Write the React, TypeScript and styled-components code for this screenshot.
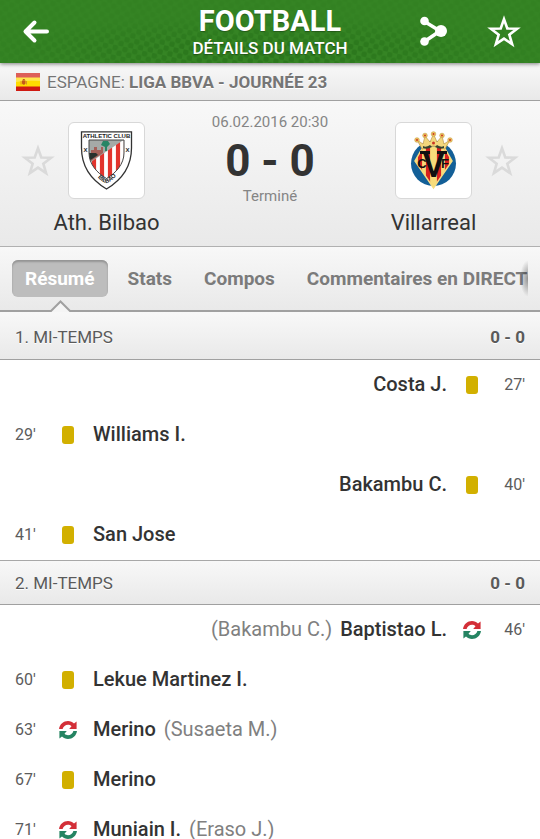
import React from 'react';
import styled, { createGlobalStyle, css } from 'styled-components';

const Global = createGlobalStyle`
  * { box-sizing: border-box; }
  body { margin: 0; background: #fff; font-family: Roboto, "Liberation Sans", sans-serif; color: #333; }
  button { font: inherit; border: 0; padding: 0; background: none; cursor: pointer; }
  h1, h2, h3, p, ul { margin: 0; padding: 0; font-weight: inherit; font-size: inherit; }
  svg { display: block; flex: none; }
`;

const silver = css`
  background: linear-gradient(#f8f8f8, #e9e9e9);
`;

const Page = styled.div`
  min-height: 100vh;
`;

const Header = styled.header`
  position: relative;
  z-index: 1;
  display: grid;
  grid-template-columns: 1fr auto 1fr;
  align-items: center;
  height: 63px;
  padding: 0 18px;
  color: #fff;
  background: #358424;
  box-shadow: 0 1px 4px rgba(0, 0, 0, 0.5);
`;

const Halftone = styled.svg`
  position: absolute;
  inset: 0;
  width: 100%;
  height: 100%;
`;

const Actions = styled.div<{ $end?: boolean }>`
  position: relative;
  display: flex;
  align-items: center;
  gap: 38px;
  padding-left: ${(p) => (p.$end ? 0 : 4)}px;
  justify-content: ${(p) => (p.$end ? 'flex-end' : 'flex-start')};
`;

const IconButton = styled.button<{ $tone?: string }>`
  display: flex;
  flex: none;
  color: ${(p) => p.$tone ?? '#fff'};
`;

const Titles = styled.div`
  position: relative;
  text-align: center;
  text-shadow: 0 1px 1px rgba(0, 0, 0, 0.3);
`;

const Title = styled.h1`
  font-size: 29px;
  line-height: 32px;
  font-weight: 700;
`;

const Subtitle = styled.p`
  font-size: 17px;
  line-height: 22px;
  font-weight: 500;
`;

const League = styled.div`
  ${silver}
  display: flex;
  align-items: center;
  height: 38px;
  gap: 7px;
  padding: 0 16px;
  border-bottom: 1px solid #a0a0a0;
  font-size: 17px;
  color: #757575;
  text-shadow: 0 1px 0 #fff;
`;

const Match = styled.section`
  ${silver}
  display: grid;
  grid-template-columns: 1fr 114px 1fr;
  height: 146px;
  border-bottom: 1px solid #b0b0b0;
`;

const Team = styled.div`
  display: grid;
  grid-template-columns: 1fr 77px 1fr;
  grid-template-rows: 77px 48px;
  align-items: center;
  padding-top: 21px;
`;

const StarSlot = styled.div<{ $away?: boolean }>`
  grid-row: 1;
  grid-column: ${(p) => (p.$away ? 3 : 1)};
  justify-self: ${(p) => (p.$away ? 'start' : 'end')};
  padding: 0 12px;
`;

const CrestBox = styled.div`
  grid-row: 1;
  grid-column: 2;
  height: 77px;
  background: #fff;
  border: 1px solid #d8d8d8;
  border-radius: 6px;
`;

const TeamName = styled.h2`
  grid-column: 1 / -1;
  grid-row: 2;
  font-size: 22px;
  line-height: 28px;
  text-align: center;
  white-space: nowrap;
`;

const ScoreBox = styled.div`
  display: flex;
  flex-direction: column;
  align-items: center;
  padding-top: 10px;
  white-space: nowrap;
  color: #858585;
  font-size: 15px;
  line-height: 22px;
`;

const Score = styled.strong`
  padding-top: 4px;
  font-size: 44px;
  line-height: 48px;
  color: #333;
`;

const Tabs = styled.nav`
  ${silver}
  position: relative;
  height: 65px;
  padding: 13px 12px 0;
  border-bottom: 2px solid #a0a0a0;
`;

const TabStrip = styled.div`
  position: relative;
  display: flex;
  gap: 8px;
  overflow: hidden;
`;

const Tab = styled.button<{ $active?: boolean }>`
  flex: none;
  height: 37px;
  padding: 0 ${(p) => (p.$active ? 13 : 12)}px;
  border-radius: 6px;
  font-size: 19px;
  font-weight: 700;
  white-space: nowrap;
  color: ${(p) => (p.$active ? '#fff' : '#7b7b7b')};
  ${(p) => p.$active && css`
    background: #bdbdbd;
    box-shadow: inset 0 2px 2px #949494;
  `}
`;

const ScrollShade = styled.div`
  position: absolute;
  top: 0;
  right: 0;
  width: 8px;
  height: 37px;
  background: radial-gradient(ellipse at right, rgba(0, 0, 0, 0.4), transparent 70%);
`;

const Notch = styled.svg`
  position: absolute;
  left: 49px;
  bottom: -2px;
`;

const PeriodBar = styled.div<{ $first?: boolean }>`
  ${silver}
  display: flex;
  align-items: center;
  justify-content: space-between;
  height: ${(p) => (p.$first ? 48 : 45)}px;
  padding: ${(p) => (p.$first ? 3 : 0)}px 15px 0;
  border-top: ${(p) => (p.$first ? '0' : '1px solid #a8a8a8')};
  border-bottom: 1px solid #a0a0a0;
  font-size: 17px;
  line-height: 20px;
  color: #5a5a5a;
  text-shadow: 0 1px 0 #fff;
`;

const Events = styled.ul`
  list-style: none;
`;

const EventRow = styled.li<{ $away?: boolean }>`
  display: flex;
  flex-direction: ${(p) => (p.$away ? 'row-reverse' : 'row')};
  align-items: center;
  height: 50px;
  padding: 0 15px 2px;
  white-space: nowrap;
`;

const Minute = styled.span<{ $away?: boolean }>`
  width: 40px;
  font-size: 16px;
  color: #5c5c5c;
  text-align: ${(p) => (p.$away ? 'right' : 'left')};
`;

const EventIcon = styled.span`
  display: flex;
  justify-content: center;
  width: 26px;
  padding-top: 2px;
`;

const YellowCard = styled.span`
  width: 12px;
  height: 18px;
  border-radius: 3px;
  background: #d2b000;
`;

const Players = styled.span<{ $away?: boolean }>`
  display: flex;
  flex-direction: ${(p) => (p.$away ? 'row-reverse' : 'row')};
  gap: 8px;
  padding: 0 12px;
  font-size: 20px;
  line-height: 26px;
`;

const Player = styled.span`
  font-weight: 500;
`;

const Replaced = styled.span`
  color: #808080;
`;

const starPoints = Array.from({ length: 10 }, (_, i) => {
  const radius = i % 2 ? 5.6 : 13.8;
  const angle = (i * Math.PI) / 5;
  return `${(18 + radius * Math.sin(angle)).toFixed(2)},${(19 - radius * Math.cos(angle)).toFixed(2)}`;
}).join(' ');

const StarIcon = () => (
  <svg width="36" height="36" viewBox="0 0 36 36" fill="none" stroke="currentColor" strokeWidth="2.6" strokeMiterlimit="8">
    <polygon points={starPoints} />
  </svg>
);

const BackIcon = () => (
  <svg width="28" height="26" viewBox="0 0 28 26" fill="none" stroke="#fff" strokeWidth="4" strokeLinecap="round" strokeLinejoin="round">
    <path d="M12.5 3.5 3.5 12.5l9 9M3.5 12.5H25" />
  </svg>
);

const ShareIcon = () => (
  <svg width="28" height="32" viewBox="0 0 28 32" fill="#fff">
    <path d="M4.500 5.500 20 15 4.500 25.500" fill="none" stroke="#fff" strokeWidth="3.600" />
    <circle cx="4.500" cy="5" r="4.300" />
    <circle cx="21" cy="15" r="6" />
    <circle cx="4.500" cy="25.500" r="4.300" />
  </svg>
);

const SpainFlag = () => (
  <svg width="24" height="18" viewBox="0 0 24 18" role="img" aria-label="Espagne">
    <path fill="#cf1a12" d="M0 0h24v18H0z" />
    <path fill="#ffdc00" d="M0 4.500h24v9H0z" />
    <path fill="#fff" opacity=".3" d="M0 0h24v8Q12 7 0 9z" />
    <path fill="#c4581a" d="M6 7.500h3.500v3Q7.800 13 6 10.500zM6.800 6h2v1.200h-2z" />
    <path fill="#d98a2a" d="M4.600 8h.9v3.500h-.9zM10 8h.9v3.500H10z" />
  </svg>
);

const SubstitutionIcon = () => {
  const arrow = 'M0 8C.7 3.200 4.500 0 9 0c2.400 0 4.500.9 6 2.400L17.600.5V8H10.200l2.300-2.800C11.500 4.200 10.300 3.800 9 3.800 6.400 3.800 4.300 5.500 3.600 8z';
  return (
    <svg width="18" height="18" viewBox="0 0 18 18" role="img" aria-label="Remplacement">
      <path fill="#d32f38" d={arrow} />
      <path fill="#258462" d={arrow} transform="rotate(180 9 9)" />
    </svg>
  );
};

const BilbaoCrest = () => (
  <svg width="75" height="75" viewBox="0 0 75 75" fontFamily="Liberation Sans, sans-serif" fontWeight="700">
    <defs>
      <clipPath id="bilbaoField"><path d="M20 17h35v13c0 11-8 20-17.500 25.500C28 50 20 41 20 30z" /></clipPath>
      <path id="bilbaoMotto" d="M26 48.500Q29 58 38 60 46 57 50 47" />
    </defs>
    <path fill="#fff" stroke="#333" strokeWidth="1.300" d="M12.500 8.800h50V25c0 18-10 32-25 41-15-9-25-23-25-41z" />
    <g clipPath="url(#bilbaoField)">
      <path fill="#fff" d="M20 17h35v40H20z" />
      <path stroke="#e2342d" strokeWidth="4.200" d="M25 30v28M33 25v34M41 20v38M49 17v35M57 17v35" />
      <path fill="#a5aaa7" d="M19 16h37L19 41z" />
      <path fill="#a46058" d="M22 27h3v-3h3v3h4v-3h2v6l-12 8z" />
      <path fill="#29312d" d="M20 30h7l2 2-9 6z" />
      <path fill="#278565" d="M34 18h5l2 3-3 3v4h-2v-4l-4-2z" />
    </g>
    <path fill="none" stroke="#444" d="M20 17h35v13c0 11-8 20-17.500 25.500C28 50 20 41 20 30z" />
    <text x="37.500" y="15.200" fontSize="6" textAnchor="middle" fill="#222">ATHLETIC CLUB</text>
    <text x="16.600" y="29" fontSize="6" textAnchor="middle" fill="#222">X</text>
    <text x="58.600" y="29" fontSize="6" textAnchor="middle" fill="#222">X</text>
    <text fontSize="6" fill="#222"><textPath href="#bilbaoMotto" startOffset="50%" textAnchor="middle">BILBAO</textPath></text>
  </svg>
);

const VillarrealCrest = () => (
  <svg width="75" height="75" viewBox="0 0 75 75" fontFamily="Liberation Sans, sans-serif" fontWeight="700">
    <defs>
      <clipPath id="villarrealField"><path d="M27 24h21l8 14-18.500 27L19 38z" /></clipPath>
    </defs>
    <circle cx="37.500" cy="40.500" r="22.500" fill="#135f97" />
    <g clipPath="url(#villarrealField)">
      <path fill="#f7dc7a" d="M18 20h40v48H18z" />
      <path stroke="#d8201f" strokeWidth="4.200" d="M24 20v48M32 20v48M43 20v48M51 20v48" />
    </g>
    <path fill="none" stroke="#f5dc80" strokeWidth="1.500" d="M27 24 19 38l18.500 27L56 38l-8-14z" />
    <path fill="#f3d77d" stroke="#b48a3a" strokeWidth=".6" d="m21 17 6 4 2-8 5 6 3.500-8 3.500 8 5-6 2 8 6-4-5 9Q37.500 20 26 26z" />
    <g fill="#efc75f" stroke="#c59a45" strokeWidth=".6">
      <circle cx="21" cy="17" r="2.300" /><circle cx="29" cy="12.500" r="2.300" /><circle cx="37.500" cy="11" r="2.300" />
      <circle cx="46" cy="12.500" r="2.300" /><circle cx="54" cy="17" r="2.300" />
    </g>
    <g fill="#cb3525">
      <circle cx="21" cy="17" r="1" /><circle cx="29" cy="12.500" r="1" /><circle cx="37.500" cy="11" r="1" />
      <circle cx="46" cy="12.500" r="1" /><circle cx="54" cy="17" r="1" /><circle cx="37.500" cy="20" r="1.500" />
    </g>
    <path fill="#34422f" d="M27 23q3 2 7-1l2 2q-5 3-9 1zm21 0q-3 2-7-1l-2 2q5 3 9 1z" />
    <path fill="#111" d="M24 28h10v3H24zm17 0h10v3H41z" />
    <text x="37.500" y="54" fontSize="36" fontFamily="Roboto, sans-serif" fontWeight="500" textAnchor="middle" fill="#111">V</text>
    <text x="26" y="45" fontSize="13" textAnchor="middle" fill="#111">C</text>
    <text x="49" y="45" fontSize="13" textAnchor="middle" fill="#111">F</text>
  </svg>
);

type MatchEvent = { minute: string; kind: 'card' | 'sub'; player: string; out?: string; away?: boolean };

const firstHalf: MatchEvent[] = [
  { minute: "27'", kind: 'card', player: 'Costa J.', away: true },
  { minute: "29'", kind: 'card', player: 'Williams I.' },
  { minute: "40'", kind: 'card', player: 'Bakambu C.', away: true },
  { minute: "41'", kind: 'card', player: 'San Jose' },
];

const secondHalf: MatchEvent[] = [
  { minute: "46'", kind: 'sub', player: 'Baptistao L.', out: '(Bakambu C.)', away: true },
  { minute: "60'", kind: 'card', player: 'Lekue Martinez I.' },
  { minute: "63'", kind: 'sub', player: 'Merino', out: '(Susaeta M.)' },
  { minute: "67'", kind: 'card', player: 'Merino' },
  { minute: "71'", kind: 'sub', player: 'Muniain I.', out: '(Eraso J.)' },
];

const EventList = ({ events }: { events: MatchEvent[] }) => (
  <Events>
    {events.map((e) => (
      <EventRow key={e.minute} $away={e.away}>
        <Minute $away={e.away}>{e.minute}</Minute>
        <EventIcon>{e.kind === 'card' ? <YellowCard /> : <SubstitutionIcon />}</EventIcon>
        <Players $away={e.away}>
          <Player>{e.player}</Player>
          {e.out && <Replaced>{e.out}</Replaced>}
        </Players>
      </EventRow>
    ))}
  </Events>
);

export default function App() {
  return (
    <>
      <Global />
      <Page>
        <Header>
          <Halftone aria-hidden="true">
            <defs>
              <pattern id="dots" width="10" height="10" patternUnits="userSpaceOnUse" patternTransform="rotate(12)">
                <circle cx="2.500" cy="2.500" r="2.900" fill="#1d6512" />
                <circle cx="7.500" cy="7.500" r="2.900" fill="#1d6512" />
              </pattern>
              <radialGradient id="fade" cx="50%" cy="80%" r="55%">
                <stop offset="0" stopColor="#fff" />
                <stop offset="1" stopColor="#222" />
              </radialGradient>
              <mask id="dotMask"><rect width="100%" height="100%" fill="url(#fade)" /></mask>
            </defs>
            <rect width="100%" height="100%" fill="url(#dots)" mask="url(#dotMask)" opacity=".5" />
          </Halftone>
          <Actions><IconButton aria-label="Retour"><BackIcon /></IconButton></Actions>
          <Titles>
            <Title>FOOTBALL</Title>
            <Subtitle>DÉTAILS DU MATCH</Subtitle>
          </Titles>
          <Actions $end>
            <IconButton aria-label="Partager"><ShareIcon /></IconButton>
            <IconButton aria-label="Favori"><StarIcon /></IconButton>
          </Actions>
        </Header>
        <League>
          <SpainFlag />
          <span>ESPAGNE: <strong>LIGA BBVA - JOURNÉE 23</strong></span>
        </League>
        <Match>
          <Team>
            <StarSlot><IconButton $tone="#dadada" aria-label="Suivre Ath. Bilbao"><StarIcon /></IconButton></StarSlot>
            <CrestBox><BilbaoCrest /></CrestBox>
            <TeamName>Ath. Bilbao</TeamName>
          </Team>
          <ScoreBox>
            <span>06.02.2016 20:30</span>
            <Score>0 - 0</Score>
            <span>Terminé</span>
          </ScoreBox>
          <Team>
            <CrestBox><VillarrealCrest /></CrestBox>
            <StarSlot $away><IconButton $tone="#dadada" aria-label="Suivre Villarreal"><StarIcon /></IconButton></StarSlot>
            <TeamName>Villarreal</TeamName>
          </Team>
        </Match>
        <Tabs>
          <TabStrip>
            <Tab $active>Résumé</Tab>
            <Tab>Stats</Tab>
            <Tab>Compos</Tab>
            <Tab>Commentaires en DIRECT</Tab>
            <ScrollShade />
          </TabStrip>
          <Notch width="23" height="12" viewBox="0 0 23 12">
            <path fill="#f5f5f5" d="M0 12 2 11 11.500 2 21 11l2 1z" />
            <path fill="none" stroke="#a0a0a0" strokeWidth="2" d="M0 11h2l9.500-9.500L21 11h2" />
          </Notch>
        </Tabs>
        <PeriodBar $first><h3>1. MI-TEMPS</h3><strong>0 - 0</strong></PeriodBar>
        <EventList events={firstHalf} />
        <PeriodBar><h3>2. MI-TEMPS</h3><strong>0 - 0</strong></PeriodBar>
        <EventList events={secondHalf} />
      </Page>
    </>
  );
}
